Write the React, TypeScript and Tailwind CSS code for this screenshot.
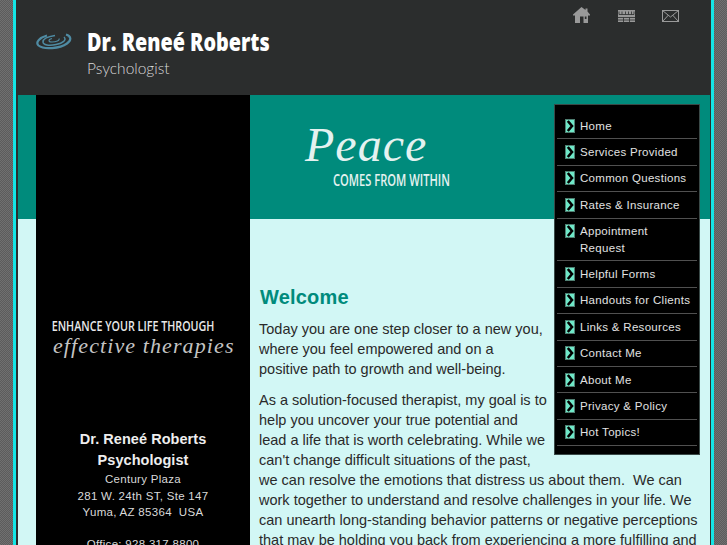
const menu = [
  ["Home"],
  ["Services Provided"],
  ["Common Questions"],
  ["Rates & Insurance"],
  ["Appointment", "Request"],
  ["Helpful Forms"],
  ["Handouts for Clients"],
  ["Links & Resources"],
  ["Contact Me"],
  ["About Me"],
  ["Privacy & Policy"],
  ["Hot Topics!"],
];

function Arrow() {
  return (
    <svg width="10" height="14" viewBox="0 0 10 14" className="mt-[1px] shrink-0">
      <rect x="0.5" y="0.5" width="9" height="13" fill="#6fe8c8" stroke="#4f7f72" />
      <path d="M2.8 2 L7 7 L2.8 12" fill="none" stroke="#000" strokeWidth="2.6" />
    </svg>
  );
}

function Spiral() {
  return (
    <svg width="36" height="18" viewBox="0 0 36 18" fill="none" stroke="#4f8ba3">
      <path d="M30 2.5 C35 4 36 8 31 11.5 C24 16.5 8 18 2.5 13.5 C-1 10 4 5.5 11 3.5" strokeWidth="2.2" />
      <path d="M28 5 C31 8 27 11 20 12.5 C13 14 7 13 7 10 C7 7 12 4.5 19 3.5" strokeWidth="1.5" />
      <path d="M23 6.5 C24 8.5 20 10 16 10 C12 10 12 7.5 16 6.5" strokeWidth="1.1" />
    </svg>
  );
}

function HomeIcon() {
  return (
    <svg width="17" height="16" viewBox="0 0 17 16" fill="#999">
      <path d="M8.5 0 L12.5 3 V1.5 H14.5 V4.5 L17 7.5 V8.5 H15 V16 H10.5 V9.5 H7 V16 H2 V8.5 H0 V7.5 Z" />
      <path d="M11.8 9.5 H13.5 V12 H11.8 Z" fill="#2b2d2d" />
    </svg>
  );
}

function CalendarIcon() {
  return (
    <svg width="17" height="12" viewBox="0 0 17 12" fill="#999">
      <path d="M0 0H17V12H0Z" />
      <path
        d="M1 1.5V4.5H16V1.5M4 1.5V4.5M7.5 1.5V4.5M10.5 1.5V4.5M13.5 1.5V4.5M0 7.5H17M0 10H17M5.5 7.5V12M11.5 7.5V12"
        fill="none"
        stroke="#2b2d2d"
        strokeWidth="0.8"
      />
    </svg>
  );
}

function MailIcon() {
  return (
    <svg width="17" height="12" viewBox="0 0 17 12" fill="none" stroke="#9a9a9a">
      <rect x="0.5" y="0.5" width="16" height="11" />
      <path d="M0.5 0.5 L8.5 7 L16.5 0.5 M0.5 11.5 L6.5 5 M16.5 11.5 L10.5 5" />
    </svg>
  );
}

export default function App() {
  return (
    <div className="flex h-[545px] w-[727px] overflow-hidden bg-[#666666] bg-[conic-gradient(#5c5c5c_25%,#707070_0_50%,#5c5c5c_0_75%,#707070_0)] bg-[length:2px_2px] font-['Liberation_Sans',sans-serif]">
      <div className="ml-[13px] h-full w-[701px] shrink-0 border-x-[3px] border-[#14e6e6] bg-[#2b2d2d]">
        <header className="relative flex h-[95px] pl-[20px]">
          <div className="mt-[32px]">
            <Spiral />
          </div>
          <div className="ml-[15px] mt-[25px]">
            <div className="origin-left scale-x-[0.824] whitespace-nowrap font-['Open_Sans',sans-serif] text-[24px] leading-[34px] font-extrabold text-white">
              Dr. Reneé Roberts
            </div>
            <div className="mt-[-3px] font-['Lato',sans-serif] text-[15.5px] leading-[24px] font-light text-[#d8d8d8]">
              Psychologist
            </div>
          </div>
          <nav className="absolute top-[7px] left-[557px] flex gap-[28px]">
            <HomeIcon />
            <div className="mt-[3px]">
              <CalendarIcon />
            </div>
            <div className="mt-[3px] ml-[-1px]">
              <MailIcon />
            </div>
          </nav>
        </header>
        <div className="ml-[2px] mr-[1px] flex h-[450px] bg-[#d2f7f5]">
          <div className="w-[18px] shrink-0">
            <div className="h-[124px] bg-[#008b7c]" />
          </div>
          <aside className="w-[214px] shrink-0 bg-black text-center text-[#d9d9d9]">
            <div className="mt-[220px] origin-left scale-x-[0.715] pl-[22px] text-left font-['Open_Sans',sans-serif] text-[15px] leading-[20px] font-semibold whitespace-nowrap text-[#e8e8e8]">
              ENHANCE YOUR LIFE THROUGH
            </div>
            <div className="mt-[-1px] pl-[17px] text-left font-['Liberation_Serif',serif] text-[22px] leading-[24px] tracking-[1.1px] whitespace-nowrap text-[#c4c4c4] italic">
              effective therapies
            </div>
            <div className="mt-[71px] text-[14.5px] leading-[21px] font-bold tracking-[0.05px] text-[#eeeeee]">
              <p>Dr. Reneé Roberts</p>
              <p>Psychologist</p>
            </div>
            <div className="text-[11.5px] leading-[16.5px] tracking-[0.3px]">
              <p>Century Plaza</p>
              <p>281 W. 24th ST, Ste 147</p>
              <p>Yuma, AZ 85364&nbsp; USA</p>
              <p className="mt-[15.5px]">Office: 928 317 8800</p>
            </div>
          </aside>
          <main className="relative flex-1">
            <div className="h-[124px] bg-[#008b7c] pt-[26px] pl-[55px] text-white">
              <div className="font-['Liberation_Serif',serif] text-[48px] leading-[48px] tracking-[1px] text-[#e4f2f0] italic">
                Peace
              </div>
              <div className="ml-[28px] origin-left scale-x-[0.655] font-['Open_Sans',sans-serif] text-[17px] leading-[22px] font-semibold whitespace-nowrap text-[#e4f2f0]">
                COMES FROM WITHIN
              </div>
            </div>
            <div className="absolute inset-x-0 top-0 pr-[10px]">
              <ul className="float-right mt-[9px] h-[351px] w-[146px] border-[1px] border-[#3a4a48] bg-black px-[2px] pt-[8px] text-[11.5px] leading-[16.5px] tracking-[0.3px] text-[#e2e2e2]">
                {menu.map((lines) => (
                  <li
                    key={lines[0]}
                    className="flex gap-[5px] border-b-[1.5px] border-[#505050] pt-[4.5px] pb-[4.4px] pl-[8px]"
                  >
                    <Arrow />
                    <div>
                      {lines.map((l) => (
                        <p key={l}>{l}</p>
                      ))}
                    </div>
                  </li>
                ))}
              </ul>
              <div className="pt-[189px] pl-[9px] text-[14.5px] leading-[20px] text-[#2a2a2a]">
                <h1 className="ml-[1px] text-[20px] leading-[26px] font-bold tracking-[0.2px] text-[#008b7c]">Welcome</h1>
                <p className="mt-[9px]">
                  Today you are one step closer to a new you,
                  <br />
                  where you feel empowered and on a
                  <br />
                  positive path to growth and well-being.
                </p>
                <p className="mt-[11px]">
                  As a solution-focused therapist, my goal is to
                  <br />
                  help you uncover your true potential and
                  <br />
                  lead a life that is worth celebrating. While we
                  <br />
                  can't change difficult situations of the past,
                  <br />
                  we can resolve the emotions that distress us about them.&nbsp; We can
                  <br />
                  work together to understand and resolve challenges in your life. We
                  <br />
                  can unearth long-standing behavior patterns or negative perceptions
                  <br />
                  that may be holding you back from experiencing a more fulfilling and
                </p>
              </div>
            </div>
          </main>
        </div>
      </div>
    </div>
  );
}
